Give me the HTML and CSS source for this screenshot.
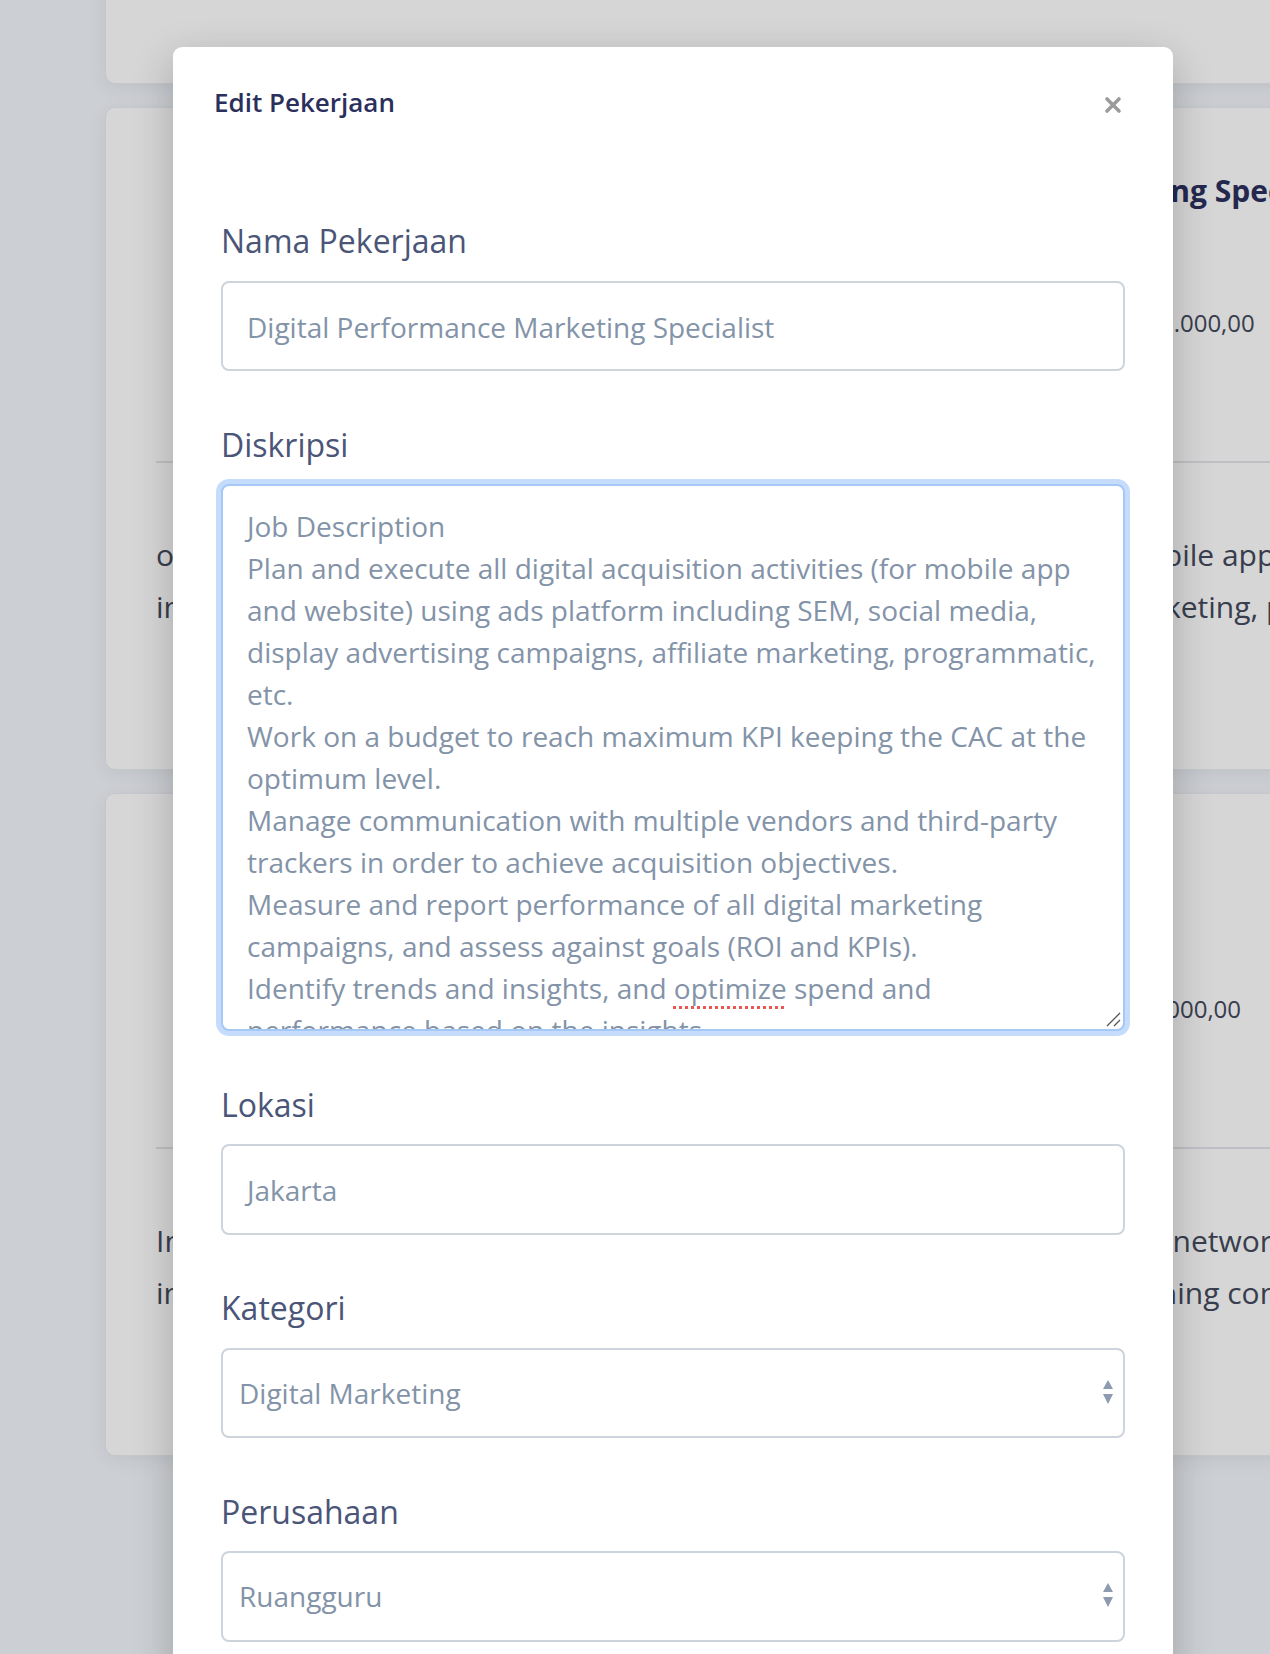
FILE: index.html
```html
<!DOCTYPE html>
<html lang="id">
<head>
<meta charset="utf-8">
<title>Edit Pekerjaan</title>
<link rel="stylesheet" href="styles.css">
</head>
<body>
<main class="page">
  <article class="card card-first">
    <div class="card-info">
      <h3 class="card-title">Frontend Engineer</h3>
      <p class="card-price">Rp 12.000.000,00</p>
    </div>
  </article>
  <article class="card">
    <div class="card-info">
      <h3 class="card-title">Digital Performance Marketing Specialist</h3>
      <p class="card-price">Rp 10.000.000,00</p>
    </div>
    <hr class="card-rule">
    <div class="card-desc">
      <p>optimize and execute digital acquisition activities across channel (for mobile app and website) using ads</p>
      <p>including: SEM, social media, display advertising campaigns, affiliate marketing, programmatic</p>
    </div>
  </article>
  <article class="card">
    <div class="card-info">
      <h3 class="card-title">Data Analyst</h3>
      <p class="card-price">Rp 8.000.000,00</p>
    </div>
    <hr class="card-rule">
    <div class="card-desc">
      <p>In this role, you will analyze and build data pipelines, across our learning network</p>
      <p>in order to improve decision making, and support with the machine learning content</p>
    </div>
  </article>
</main>
<div class="overlay"></div>
<section class="modal">
  <header class="modal-head">
    <h2 class="modal-title">Edit Pekerjaan</h2>
    <button class="modal-close" type="button" aria-label="Tutup">
      <svg width="18" height="18" viewBox="0 0 18 18"><path d="M3 3 L15 15 M15 3 L3 15" stroke="#9b9b9b" stroke-width="3.6" stroke-linecap="round"/></svg>
    </button>
  </header>
  <form class="modal-body">
    <div class="field">
      <label class="field-label">Nama Pekerjaan</label>
      <div class="input">Digital Performance Marketing Specialist</div>
    </div>
    <div class="field">
      <label class="field-label">Diskripsi</label>
      <div class="textarea">
        <div class="textarea-text">Job Description<br>Plan and execute all digital acquisition activities (for mobile app<br>and website) using ads platform including SEM, social media,<br>display advertising campaigns, affiliate marketing, programmatic,<br>etc.<br>Work on a budget to reach maximum KPI keeping the CAC at the<br>optimum level.<br>Manage communication with multiple vendors and third-party<br>trackers in order to achieve acquisition objectives.<br>Measure and report performance of all digital marketing<br>campaigns, and assess against goals (ROI and KPIs).<br>Identify trends and insights, and <span class="spell">optimize</span> spend and<br>performance based on the insights.</div>
        <svg class="grip" width="18" height="18" viewBox="0 0 18 18"><path d="M3 16 L16 3 M10 16 L16 10" stroke="#555" stroke-width="1.3"/></svg>
      </div>
    </div>
    <div class="field">
      <label class="field-label">Lokasi</label>
      <div class="input">Jakarta</div>
    </div>
    <div class="field">
      <label class="field-label">Kategori</label>
      <div class="select">
        <span>Digital Marketing</span>
        <svg width="12" height="26" viewBox="0 0 12 26"><path d="M6 0 L11 9 L1 9 Z M1 14 L11 14 L6 24 Z" fill="#8d9ab0"/></svg>
      </div>
    </div>
    <div class="field">
      <label class="field-label">Perusahaan</label>
      <div class="select">
        <span>Ruangguru</span>
        <svg width="12" height="26" viewBox="0 0 12 26"><path d="M6 0 L11 9 L1 9 Z M1 14 L11 14 L6 24 Z" fill="#8d9ab0"/></svg>
      </div>
    </div>
  </form>
</section>
</body>
</html>
```
FILE: styles.css
```css
html, body {
  margin: 0;
  padding: 0;
}
body {
  width: 1270px;
  height: 1654px;
  overflow: hidden;
  background: #f4f7fc;
  font-family: "Open Sans", "Noto Sans", sans-serif;
  position: relative;
}
.page {
  padding-left: 105px;
}
.card {
  box-sizing: border-box;
  width: 1400px;
  height: 663px;
  margin-bottom: 23px;
  padding: 60px 0 0 50px;
  background: #fff;
  border: 1px solid #eceef2;
  border-radius: 10px;
  box-shadow: 0 4px 18px rgba(40, 50, 80, 0.08);
}
.card-first {
  margin-top: -579px;
}
.card-info {
  padding-left: 588px;
}
.card-title {
  margin: 0;
  font-size: 30px;
  line-height: 45px;
  font-weight: 700;
  color: #2b305e;
}
.card-price {
  margin: 90px 0 0 0;
  padding-left: 319px;
  font-size: 24px;
  line-height: 39px;
  color: #434a5c;
}
.card-rule {
  margin: 119px 0 0 0;
  border: 0;
  border-top: 2px solid #e3e5ea;
}
.card-desc {
  margin-top: 66px;
  font-size: 30px;
  line-height: 52px;
  color: #434a5c;
  white-space: nowrap;
}
.card-desc p {
  margin: 0;
}
.overlay {
  position: absolute;
  inset: 0;
  background: rgba(0, 0, 0, 0.16);
}
.modal {
  position: absolute;
  left: 173px;
  top: 47px;
  width: 1000px;
  height: 1700px;
  background: #fff;
  border-radius: 9px;
  box-shadow: 0 12px 40px rgba(0, 0, 0, 0.22);
}
.modal-head {
  display: flex;
  justify-content: space-between;
  align-items: center;
  padding: 37px 51px 0 41px;
}
.modal-title {
  margin: 0;
  font-size: 26px;
  line-height: 36px;
  font-weight: 600;
  color: #2b2f5c;
}
.modal-close {
  display: flex;
  padding: 0;
  margin-top: 6px;
  border: 0;
  background: none;
}
.modal-body {
  padding: 98px 48px 0 48px;
}
.field {
  margin-bottom: 50.5px;
}
.field-label {
  display: block;
  margin-bottom: 17.5px;
  font-size: 32px;
  line-height: 45px;
  color: #4a5578;
}
.input,
.select,
.textarea {
  box-sizing: border-box;
  border: 2px solid #cdd4dc;
  border-radius: 8px;
  font-size: 28px;
  line-height: 42px;
  color: #8393a8;
  background: #fff;
}
.input {
  height: 90.5px;
  display: flex;
  align-items: center;
  padding: 2px 24px 0 24px;
}
.select {
  height: 90.5px;
  display: flex;
  align-items: center;
  justify-content: space-between;
  padding: 0 9px 0 16px;
}
.textarea {
  position: relative;
  height: 547px;
  padding: 19px 24px 0 24px;
  overflow: hidden;
  border-color: #a6c8f6;
  box-shadow: 0 0 0 5px #c6dcfc;
}
.textarea-text {
  white-space: nowrap;
}
.spell {
  text-decoration: underline dotted #e8564f;
  text-decoration-thickness: 3px;
  text-underline-offset: 7px;
}
.grip {
  position: absolute;
  right: 1px;
  bottom: 1px;
}
```
